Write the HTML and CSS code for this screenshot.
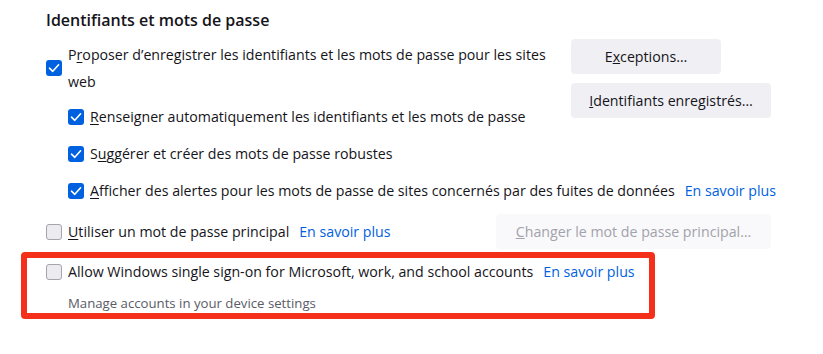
FILE: index.html
```html
<!DOCTYPE html>
<html>
<head>
  <title>Identifiants et mots de passe</title>
  <link rel="stylesheet" href="styles.css">
</head>
<body>
  <div class="section">
    <h2 class="section-title">Identifiants et mots de passe</h2>

    <div class="top-row">
      <div class="options">
        <label class="check-row wrap">
          <span class="box checked">
            <svg viewBox="0 0 16 16"><polyline points="3.5,8.2 6.8,11.3 12.6,4.8"/></svg>
          </span>
          <span class="text">P<u>r</u>oposer d’enregistrer les identifiants et les mots de passe pour les sites web</span>
        </label>

        <div class="sub-options">
          <label class="check-row">
            <span class="box checked">
              <svg viewBox="0 0 16 16"><polyline points="3.5,8.2 6.8,11.3 12.6,4.8"/></svg>
            </span>
            <span class="text"><u>R</u>enseigner automatiquement les identifiants et les mots de passe</span>
          </label>
          <label class="check-row">
            <span class="box checked">
              <svg viewBox="0 0 16 16"><polyline points="3.5,8.2 6.8,11.3 12.6,4.8"/></svg>
            </span>
            <span class="text">S<u>u</u>ggérer et créer des mots de passe robustes</span>
          </label>
          <label class="check-row">
            <span class="box checked">
              <svg viewBox="0 0 16 16"><polyline points="3.5,8.2 6.8,11.3 12.6,4.8"/></svg>
            </span>
            <span class="text"><u>A</u>fficher des alertes pour les mots de passe de sites concernés par des fuites de données</span>
            <a class="learn-more" href="#">En savoir plus</a>
          </label>
        </div>
      </div>

      <div class="buttons">
        <button class="btn btn-exceptions">E<u>x</u>ceptions…</button>
        <button class="btn btn-saved"><u>I</u>dentifiants enregistrés…</button>
      </div>
    </div>

    <div class="primary-row">
      <label class="check-row">
        <span class="box"></span>
        <span class="text"><u>U</u>tiliser un mot de passe principal</span>
        <a class="learn-more" href="#">En savoir plus</a>
      </label>
      <button class="btn btn-disabled" disabled><u>C</u>hanger le mot de passe principal…</button>
    </div>
  </div>

  <div class="highlight">
    <label class="check-row">
      <span class="box"></span>
      <span class="text">Allow Windows single sign-on for Microsoft, work, and school accounts</span>
      <a class="learn-more" href="#">En savoir plus</a>
    </label>
    <div class="hint">Manage accounts in your device settings</div>
  </div>
</body>
</html>
```

FILE: styles.css
```css
body {
  margin: 0;
  background: #fff;
  color: #15141a;
  font-family: "Open Sans", "Noto Sans", sans-serif;
  font-size: 14.2px;
}

.section {
  width: 725px;
  padding: 0 0 0 46px;
}

.section-title {
  margin: 0;
  padding-top: 9px;
  font-size: 16px;
  font-weight: 600;
  line-height: 22px;
}

.top-row {
  display: flex;
  justify-content: space-between;
  margin-top: 8px;
}

.options {
  flex: 1;
  min-width: 0;
  padding-top: 2px;
}

.check-row {
  display: flex;
  align-items: center;
  line-height: 24px;
  white-space: nowrap;
}

.check-row.wrap {
  width: 500px;
  line-height: 27px;
  white-space: normal;
}

.box {
  flex: none;
  width: 16px;
  height: 16px;
  margin-right: 6px;
  box-sizing: border-box;
  border: 1px solid #a4a4ac;
  border-radius: 3px;
  background: #ececf0;
}

.box.checked {
  border: none;
  background: #0061e0;
}

.box svg {
  display: block;
  width: 16px;
  height: 16px;
  fill: none;
  stroke: #fff;
  stroke-width: 1.6;
  stroke-linecap: round;
  stroke-linejoin: round;
}

.text u {
  text-decoration-thickness: 1px;
  text-underline-offset: 2px;
}

.sub-options {
  display: flex;
  flex-direction: column;
  gap: 13px;
  margin-top: 10px;
  padding-left: 22px;
}

.learn-more {
  margin-left: 10px;
  color: #0061e0;
  text-decoration: none;
}

.buttons {
  flex: none;
  display: flex;
  flex-direction: column;
  align-items: flex-start;
  gap: 9px;
}

.btn {
  height: 35px;
  padding: 0;
  border: none;
  border-radius: 4px;
  background: #f0f0f4;
  color: #15141a;
  font-family: inherit;
  font-size: 14.2px;
  white-space: nowrap;
}

.btn-exceptions {
  width: 150px;
}

.btn-saved {
  width: 200px;
}

.btn-disabled {
  width: 275px;
  background: #f9f9fb;
  color: #a2a2aa;
}

.primary-row {
  display: flex;
  justify-content: space-between;
  align-items: center;
  margin-top: 11px;
}

.highlight {
  box-sizing: border-box;
  width: 634px;
  height: 67px;
  margin: 3px 0 0 21px;
  padding: 2px 0 0 19px;
  border: 6px solid #f4301a;
  border-radius: 4px;
}

.hint {
  margin-top: 9px;
  padding-left: 22px;
  color: #5b5b66;
  font-size: 13.2px;
  line-height: 20px;
}
```
